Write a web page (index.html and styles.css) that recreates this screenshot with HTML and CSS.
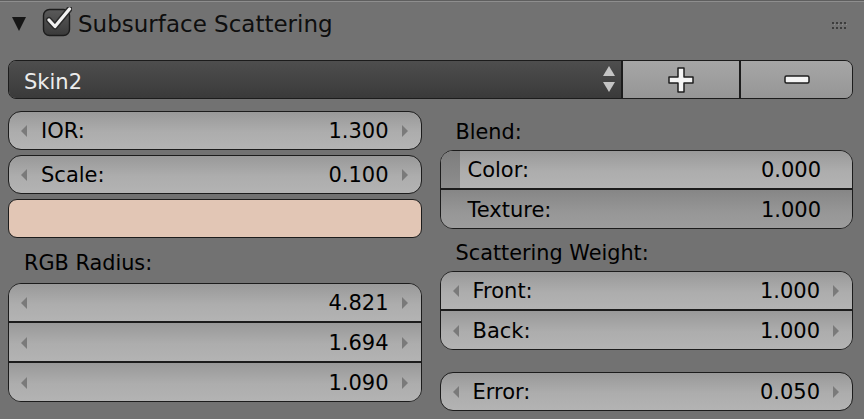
FILE: index.html
```html
<!DOCTYPE html>
<html>
<head>
<meta charset="utf-8">
<link rel="stylesheet" href="styles.css">
</head>
<body>
<div class="panel">
  <div class="panel-head">
    <svg class="disclosure" width="14" height="14" viewBox="0 0 14 14"><polygon points="0,0 14,0 7,14" fill="#161616"/></svg>
    <svg class="check" width="30" height="30" viewBox="0 0 30 30">
      <defs><linearGradient id="cb" x1="0" y1="0" x2="0" y2="1"><stop offset="0" stop-color="#5a5a5a"/><stop offset="1" stop-color="#3a3a3a"/></linearGradient></defs>
      <rect x="1.5" y="2.5" width="26" height="26" rx="6" fill="url(#cb)" stroke="#1c1c1c" stroke-width="1.4"/>
      <polyline points="7,13 13,19.5 27.5,2" fill="none" stroke="#2a2a2a" stroke-width="6" stroke-linecap="round" stroke-linejoin="round"/>
      <polyline points="7,13 13,19.5 27.5,2" fill="none" stroke="#f2f2f2" stroke-width="3.2" stroke-linecap="round" stroke-linejoin="round"/>
    </svg>
    <span class="title">Subsurface Scattering</span>
    <svg class="grip" width="16" height="7" viewBox="0 0 16 7">
      <g fill="#3c3c3c">
        <rect x="0" y="0" width="2" height="2"/><rect x="4" y="0" width="2" height="2"/><rect x="8" y="0" width="2" height="2"/><rect x="12" y="0" width="2" height="2"/>
        <rect x="0" y="5" width="2" height="2"/><rect x="4" y="5" width="2" height="2"/><rect x="8" y="5" width="2" height="2"/><rect x="12" y="5" width="2" height="2"/>
      </g>
      <g fill="#8c8c8c">
        <rect x="2" y="2" width="1" height="1"/><rect x="6" y="2" width="1" height="1"/><rect x="10" y="2" width="1" height="1"/><rect x="14" y="2" width="1" height="1"/>
      </g>
    </svg>
  </div>

  <div class="select-row">
    <div class="select">
      <span class="select-text">Skin2</span>
      <svg class="updown" width="12" height="28" viewBox="0 0 12 28"><polygon points="6,0 12,10 0,10" fill="#c4c4c4"/><polygon points="0,16 12,16 6,26" fill="#c4c4c4"/></svg>
    </div>
    <div class="btn btn-add">
      <svg width="26" height="26" viewBox="0 0 26 26"><path d="M10 1h6v9h9v6h-9v9h-6v-9h-9v-6h9z" fill="#f4f4f4" stroke="#1e1e1e" stroke-width="1.5" stroke-linejoin="round"/></svg>
    </div>
    <div class="btn btn-remove">
      <svg width="26" height="10" viewBox="0 0 26 10"><rect x="1" y="1" width="24" height="7" rx="1.5" fill="#f4f4f4" stroke="#1e1e1e" stroke-width="1.5"/></svg>
    </div>
  </div>

  <div class="cols">
    <div class="col">
      <div class="num single">
        <span class="arr-l"></span><span class="lbl">IOR:</span><span class="val">1.300</span><span class="arr-r"></span>
      </div>
      <div class="num single">
        <span class="arr-l"></span><span class="lbl">Scale:</span><span class="val">0.100</span><span class="arr-r"></span>
      </div>
      <div class="swatch"></div>
      <div class="label label-rgb">RGB Radius:</div>
      <div class="group">
        <div class="num"><span class="arr-l"></span><span class="lbl"></span><span class="val">4.821</span><span class="arr-r"></span></div>
        <div class="num"><span class="arr-l"></span><span class="lbl"></span><span class="val">1.694</span><span class="arr-r"></span></div>
        <div class="num"><span class="arr-l"></span><span class="lbl"></span><span class="val">1.090</span><span class="arr-r"></span></div>
      </div>
    </div>
    <div class="col">
      <div class="label label-blend">Blend:</div>
      <div class="group">
        <div class="slider slider-empty"><span class="lbl">Color:</span><span class="val">0.000</span></div>
        <div class="slider slider-full"><span class="lbl">Texture:</span><span class="val">1.000</span></div>
      </div>
      <div class="label label-weight">Scattering Weight:</div>
      <div class="group">
        <div class="num"><span class="arr-l"></span><span class="lbl">Front:</span><span class="val">1.000</span><span class="arr-r"></span></div>
        <div class="num"><span class="arr-l"></span><span class="lbl">Back:</span><span class="val">1.000</span><span class="arr-r"></span></div>
      </div>
      <div class="num single error">
        <span class="arr-l"></span><span class="lbl">Error:</span><span class="val">0.050</span><span class="arr-r"></span>
      </div>
    </div>
  </div>
</div>
</body>
</html>
```

FILE: styles.css
```css
html, body {
  margin: 0;
  padding: 0;
  background: #727272;
}
body {
  width: 864px;
  height: 419px;
  overflow: hidden;
  font-family: "DejaVu Sans", sans-serif;
  color: #000;
}
.panel {
  box-sizing: border-box;
  width: 864px;
  height: 419px;
  padding: 0 11px 0 8px;
  border-top: 1px solid #5e5e5e;
  box-shadow: inset 0 1px 0 #8e8e8e;
}
.panel-head {
  height: 45px;
  display: flex;
  align-items: center;
}
.disclosure {
  margin-left: 4px;
  margin-top: 1px;
}
.check {
  margin-left: 16px;
  margin-top: -3px;
}
.title {
  margin-left: 6px;
  font-size: 23px;
  color: #0e0e0e;
  flex: 1;
}
.grip {
  margin-right: 5px;
  margin-top: 4px;
}

.select-row {
  margin-top: 14px;
  height: 39px;
  display: flex;
  box-sizing: border-box;
  border: 1px solid #1c1c1c;
  border-radius: 8px;
  overflow: hidden;
}
.select {
  flex: 0 0 614px;
  display: flex;
  align-items: center;
  background: linear-gradient(to bottom, #4e4e4e, #3a3a3a);
  border-right: 2px solid #1c1c1c;
  box-sizing: border-box;
  padding: 0 6px 0 15px;
}
.select-text {
  flex: 1;
  color: #ececec;
  font-size: 21px;
  margin-top: 5px;
}
.updown {
  margin-top: 1px;
}
.btn {
  display: flex;
  align-items: center;
  justify-content: center;
  background: linear-gradient(to bottom, #a6a6a6, #969696);
}
.btn-add {
  flex: 0 0 118px;
  border-right: 2px solid #1c1c1c;
  box-sizing: border-box;
}
.btn-remove {
  flex: 1;
}

.cols {
  margin-top: 12px;
  display: flex;
  gap: 18px;
}
.col {
  flex: 1;
  display: flex;
  flex-direction: column;
}

.num, .slider {
  height: 39px;
  box-sizing: border-box;
  display: flex;
  align-items: center;
  font-size: 21px;
  padding-top: 1px;
  background: linear-gradient(to bottom, #999999 0%, #adadad 55%, #b3b3b3 100%);
}
.num {
  padding-left: 12px;
  padding-right: 13px;
}
.single {
  border: 1px solid #1c1c1c;
  border-radius: 13px;
  height: 39px;
}
.single + .single {
  margin-top: 5px;
}
.lbl {
  flex: 1;
}
.arr-l {
  width: 0;
  height: 0;
  border-top: 6px solid transparent;
  border-bottom: 6px solid transparent;
  border-right: 6px solid #7a7a7a;
  margin-right: 14px;
}
.arr-r {
  width: 0;
  height: 0;
  border-top: 6px solid transparent;
  border-bottom: 6px solid transparent;
  border-left: 6px solid #7a7a7a;
  margin-left: 13px;
}

.swatch {
  margin-top: 5px;
  height: 39px;
  box-sizing: border-box;
  border: 1px solid #1c1c1c;
  border-radius: 9px;
  background: #e2c6b5;
}

.label {
  font-size: 20.8px;
  padding-left: 16px;
  box-sizing: border-box;
  display: flex;
  align-items: center;
}
.label-rgb {
  height: 45px;
  padding-top: 5px;
}
.label-blend {
  height: 39px;
  padding-top: 2px;
}
.label-weight {
  height: 42px;
  padding-top: 6px;
}

.group {
  border: 1px solid #1c1c1c;
  border-radius: 13px;
  overflow: hidden;
  display: flex;
  flex-direction: column;
}
.group > * {
  height: 37px;
}
.group > * + * {
  border-top: 2px solid #1c1c1c;
  height: 40px;
}

.slider {
  padding-left: 27px;
  padding-right: 31px;
}
.slider-empty {
  background:
    linear-gradient(to bottom, #7d7d7d, #8e8e8e) left / 19px 100% no-repeat,
    linear-gradient(to bottom, #999999 0%, #adadad 55%, #b3b3b3 100%);
}
.slider-full {
  background: linear-gradient(to bottom, #868686 0%, #979797 60%, #9c9c9c 100%);
}

.error {
  margin-top: 22px;
}
```
